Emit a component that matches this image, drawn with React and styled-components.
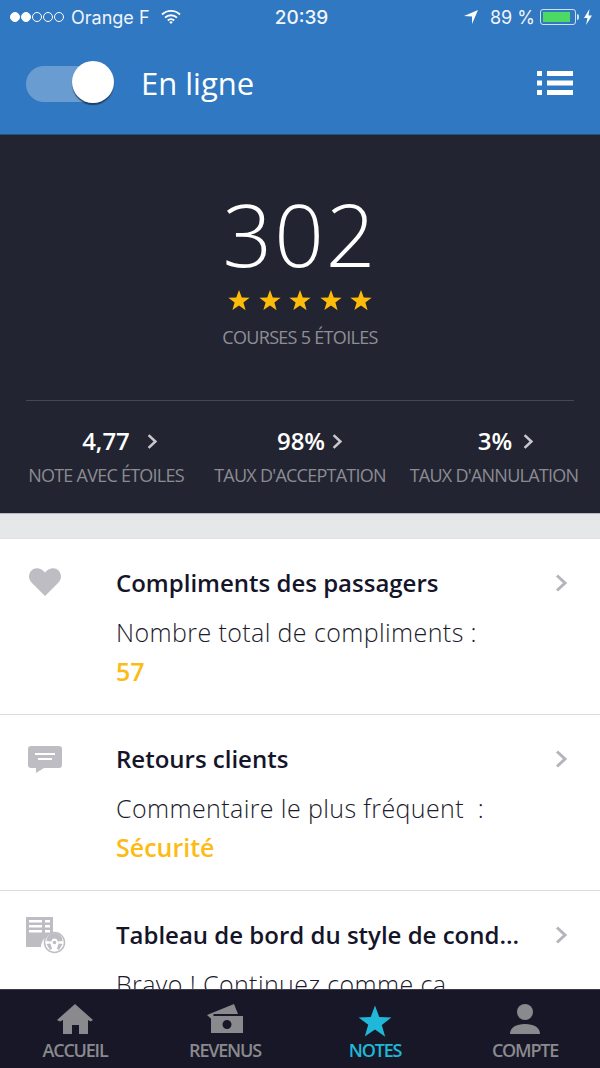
import React from 'react'
import styled, { createGlobalStyle } from 'styled-components'

const GlobalStyle = createGlobalStyle`
html, body {
    margin: 0;
    padding: 0;
    background: #fff;
}
* {
    box-sizing: border-box;
}
`

const Screen = styled.div`
width: 600px;
height: 1068px;
display: flex;
flex-direction: column;
overflow: hidden;
font-family: "Open Sans", "Noto Sans", sans-serif;
`

const TopBar = styled.header`
height: 135px;
flex: none;
background: #3078c1;
border-bottom: 1px solid #23547f;
color: #fff;
`

const StatusBar = styled.div`
height: 34px;
padding: 0 7px 0 10px;
display: grid;
grid-template-columns: 1fr auto 1fr;
align-items: center;
font-family: "Inter", "Open Sans", sans-serif;
font-size: 18px;
color: #f1f5fa;
`

const StatusSide = styled.div`
display: flex;
align-items: center;
justify-content: ${props => props.$end ? 'flex-end' : 'flex-start'};
`

const Signal = styled.div`
display: flex;
gap: 1px;
margin-right: 7px;
`

const Dot = styled.span`
width: 10px;
height: 10px;
border-radius: 50%;
border: 1px solid #fff;
background: ${props => props.$on ? '#fff' : 'transparent'};
`

const Clock = styled.div`
font-weight: 500;
font-size: 19px;
`

const Battery = styled.div`
width: 36px;
height: 16px;
margin: 0 7px 0 5px;
padding: 2px 5px 2px 2px;
border: 1px solid #cfe0f0;
border-radius: 3px;
position: relative;
&:after {
    content: "";
    position: absolute;
    right: -4px;
    top: 4px;
    width: 2px;
    height: 6px;
    background: #cfe0f0;
    border-radius: 0 2px 2px 0;
}
`

const BatteryFill = styled.div`
height: 100%;
background: #4cd964;
`

const NavRow = styled.div`
height: 100px;
padding: 0 27px 3px 26px;
display: flex;
align-items: center;
`

const Toggle = styled.div`
width: 88px;
height: 36px;
margin-top: 3px;
border-radius: 18px;
background: rgba(255, 255, 255, 0.28);
position: relative;
`

const Knob = styled.div`
position: absolute;
right: 0;
top: -5px;
width: 42px;
height: 42px;
border-radius: 50%;
background: #fff;
box-shadow: 0 2px 1px rgba(0, 0, 0, 0.45);
`

const NavTitle = styled.div`
margin-left: 27px;
font-size: 31px;
line-height: 40px;
flex: 1;
`

const Hero = styled.section`
height: 378px;
flex: none;
background: #232431;
padding: 0 26px;
display: flex;
flex-direction: column;
align-items: center;
`

const BigNumber = styled.div`
margin-top: 46px;
font-size: 87px;
font-weight: 300;
line-height: 104px;
color: #fff;
letter-spacing: 2px;
`

const Stars = styled.div`
margin-top: 4px;
display: flex;
gap: 8.5px;
height: 24px;
`

const CourseLabel = styled.div`
margin-top: 12px;
font-size: 18px;
line-height: 24px;
color: #8e8f96;
letter-spacing: -0.7px;
`

const Stats = styled.div`
margin-top: 51px;
width: 100%;
border-top: 1px solid #45464f;
display: grid;
grid-template-columns: 160px 228px 160px;
padding-top: 25px;
`

const Stat = styled.div`
display: flex;
flex-direction: column;
align-items: center;
`

const StatValue = styled.div`
display: flex;
align-items: center;
gap: ${props => props.$gap}px;
padding-left: ${props => props.$indent}px;
font-size: 24px;
font-weight: 600;
line-height: 30px;
color: #fff;
`

const StatLabel = styled.div`
margin-top: 6px;
font-size: 18px;
line-height: 26px;
color: #8b8c93;
white-space: nowrap;
letter-spacing: -0.75px;
`

const Band = styled.div`
height: 26px;
flex: none;
background: #e6e7e9;
border-top: 1px solid #b9b9bd;
border-bottom: 1px solid #dfe1e6;
`

const List = styled.main`
flex: 1;
min-height: 0;
overflow: hidden;
background: #fff;
`

const Row = styled.article`
height: 176px;
padding: 27px 32px 0 26px;
display: grid;
grid-template-columns: 90px 1fr 20px;
border-bottom: 1px solid #dcdde2;
`

const RowIcon = styled.div`
height: 36px;
color: #bdbdc3;
`

const RowBody = styled.div`
min-width: 0;
`

const RowTitle = styled.h2`
margin: 0;
padding-right: 24px;
font-size: 24px;
font-weight: 600;
line-height: 34px;
color: #15152a;
white-space: nowrap;
overflow: hidden;
text-overflow: ellipsis;
`

const RowText = styled.p`
margin: 15px 0 0;
font-size: 25px;
font-weight: 300;
line-height: 34px;
color: #1b1b2b;
white-space: pre;
letter-spacing: 0.4px;
`

const RowValue = styled.div`
margin-top: 5px;
font-size: 25px;
font-weight: 600;
line-height: 34px;
color: #fdbb14;
`

const RowChevron = styled.div`
height: 34px;
display: flex;
align-items: center;
justify-content: flex-end;
`

const TabBar = styled.nav`
height: 79px;
flex: none;
background: #171727;
border-top: 1px solid #3c3c48;
display: grid;
grid-template-columns: 150px 150px 150px 150px;
`

const Tab = styled.div`
display: flex;
flex-direction: column;
align-items: center;
padding-top: 14px;
color: ${props => props.$active ? '#1fb8d8' : '#8a8a8e'};
`

const TabIcon = styled.div`
height: 33px;
`

const TabLabel = styled.div`
font-size: 18px;
font-weight: 600;
line-height: 26px;
letter-spacing: -1.2px;
`

const StarIcon = ({ size = 24, color = 'currentColor' }) => (
    <svg width={size} height={size} viewBox="0 0 24 24">
        <path fill={color} d="M12 1l3 8.200 8.600.3-6.800 5.300 2.400 8.300L12 18l-7.200 4.900 2.400-8.300L.4 9.500 9 9.200z" />
    </svg>
)

const Chevron = ({ color = '#b4b4ba', w = 14, h = 20 }) => (
    <svg width={w} height={h} viewBox="0 0 14 20">
        <path d="M3 2.500l8 7.500-8 7.500" fill="none" stroke={color} strokeWidth="3" />
    </svg>
)

const Wifi = () => (
    <svg width="20" height="16" viewBox="0 0 20 16" style={{ marginLeft: 11 }}>
        <path d="M1 5.500a13 13 0 0 1 18 0M4 8.700a8.600 8.600 0 0 1 12 0M6.800 11.500a4.600 4.600 0 0 1 6.400 0" fill="none" stroke="#fff" strokeWidth="1.800" />
        <path d="M8.200 13a2.600 2.600 0 0 1 3.600 0L10 15z" fill="#fff" />
    </svg>
)

const LocationArrow = () => (
    <svg width="16" height="16" viewBox="0 0 16 16" style={{ marginRight: 11 }}>
        <path d="M15 1L9 15V7.500L1 7z" fill="#fff" />
    </svg>
)

const Bolt = () => (
    <svg width="10" height="16" viewBox="0 0 10 16">
        <path d="M6.500 0L1 9h3.500L3 16l6-9.500H5.500z" fill="#fff" />
    </svg>
)

const MenuIcon = () => (
    <svg width="36" height="24" viewBox="0 0 36 24">
        <path fill="#fff" d="M0 0h5v5H0zM0 9.500h5v5H0zM0 19h5v5H0zM10 0h26v5H10zM10 9.500h26v5H10zM10 19h26v5H10z" />
    </svg>
)

const HeartIcon = () => (
    <svg width="32" height="28" viewBox="0 0 32 28" style={{ marginLeft: 3, marginTop: 2 }}>
        <path fill="currentColor" d="M16 28L2.500 14.500C-1 11-.5 5.500 2.500 2.500c3.500-3.300 9-3 13.500 2 4.500-5 10-5.300 13.500-2 3 3 3.500 8.500 0 12z" />
    </svg>
)

const CommentIcon = () => (
    <svg width="34" height="27" viewBox="0 0 34 27" style={{ marginTop: 4, marginLeft: 2 }}>
        <path fill="currentColor" fillRule="evenodd" d="M3 0h28a3 3 0 0 1 3 3v16a3 3 0 0 1-3 3H16l-8 5v-5H3a3 3 0 0 1-3-3V3a3 3 0 0 1 3-3zM7 7v2h20V7zM10 12v2h14v-2z" />
    </svg>
)

const DashboardIcon = () => (
    <svg width="40" height="37" viewBox="0 0 40 37" style={{ marginTop: -1 }}>
        <path fill="currentColor" d="M0 0h27v18a12 12 0 0 0-12 12H0z" />
        <path fill="#fff" d="M3 3h13v2.500H3zM19 3h5v2.500h-5zM3 8h13v2.500H3zM19 8h5v2.500h-5zM3 13h13v2.500H3zM19 13h5v2.500h-5z" />
        <circle cx="28.500" cy="25.500" r="10" fill="#fff" stroke="currentColor" strokeWidth="1.500" />
        <path fill="currentColor" d="M20.500 24a8 8 0 0 1 16 0l-5 .5a3 3 0 0 0-6 0z" />
        <circle cx="28.500" cy="25.500" r="1.800" fill="currentColor" />
        <path fill="currentColor" d="M20.500 27l4-.5 1.500 5.500-2 1zM36.500 27l-4-.5-1.500 5.500 2 1z" />
    </svg>
)

const HomeIcon = () => (
    <svg width="36" height="30" viewBox="0 0 36 30">
        <path fill="currentColor" d="M18 0l18 16-2.500 1.500L31 16v14H22v-9h-7v9H6V16l-3 1.500L0 16z" />
    </svg>
)

const CashIcon = () => (
    <svg width="36" height="29" viewBox="0 0 36 29">
        <path fill="currentColor" d="M0 11L27 0l4 10H6.500v7z" />
        <path fill="currentColor" fillRule="evenodd" d="M4 12h32v17H4zM20 16a4.500 4.500 0 1 0 0 9 4.500 4.500 0 0 0 0-9z" />
    </svg>
)

const PersonIcon = () => (
    <svg width="30" height="30" viewBox="0 0 30 30">
        <circle cx="15" cy="8" r="8" fill="currentColor" />
        <path fill="currentColor" d="M0 30c0-6.500 6-10 15-10s15 3.500 15 10z" />
    </svg>
)

const stats = [
    { value: '4,77', label: 'NOTE AVEC ÉTOILES', gap: 16, indent: 28 },
    { value: '98%', label: "TAUX D'ACCEPTATION", gap: 6, indent: 20 },
    { value: '3%', label: "TAUX D'ANNULATION", gap: 10, indent: 24 },
]

const rows = [
    { icon: <HeartIcon />, title: 'Compliments des passagers', text: 'Nombre total de compliments :', value: '57' },
    { icon: <CommentIcon />, title: 'Retours clients', text: 'Commentaire le plus fréquent  :', value: 'Sécurité' },
    { icon: <DashboardIcon />, title: 'Tableau de bord du style de conduite', text: 'Bravo ! Continuez comme ça' },
]

const tabs = [
    { label: 'ACCUEIL', icon: <HomeIcon /> },
    { label: 'REVENUS', icon: <CashIcon /> },
    { label: 'NOTES', icon: <StarIcon size={34} />, active: true },
    { label: 'COMPTE', icon: <PersonIcon /> },
]

const App = () => {
    return (
        <Screen>
            <GlobalStyle />
            <TopBar>
                <StatusBar>
                    <StatusSide>
                        <Signal>
                            {[true, true, false, false, false].map((on, i) => <Dot key={i} $on={on} />)}
                        </Signal>
                        Orange F
                        <Wifi />
                    </StatusSide>
                    <Clock>20:39</Clock>
                    <StatusSide $end>
                        <LocationArrow />
                        89 %
                        <Battery><BatteryFill /></Battery>
                        <Bolt />
                    </StatusSide>
                </StatusBar>
                <NavRow>
                    <Toggle><Knob /></Toggle>
                    <NavTitle>En ligne</NavTitle>
                    <MenuIcon />
                </NavRow>
            </TopBar>
            <Hero>
                <BigNumber>302</BigNumber>
                <Stars>
                    {[0, 1, 2, 3, 4].map(i => <StarIcon key={i} size={22} color="#fdbb0a" />)}
                </Stars>
                <CourseLabel>COURSES 5 ÉTOILES</CourseLabel>
                <Stats>
                    {stats.map(s => (
                        <Stat key={s.label}>
                            <StatValue $gap={s.gap} $indent={s.indent}>{s.value}<Chevron color="#c8c8cc" w={12} h={17} /></StatValue>
                            <StatLabel>{s.label}</StatLabel>
                        </Stat>
                    ))}
                </Stats>
            </Hero>
            <Band />
            <List>
                {rows.map(r => (
                    <Row key={r.title}>
                        <RowIcon>{r.icon}</RowIcon>
                        <RowBody>
                            <RowTitle>{r.title}</RowTitle>
                            <RowText>{r.text}</RowText>
                            {r.value && <RowValue>{r.value}</RowValue>}
                        </RowBody>
                        <RowChevron><Chevron /></RowChevron>
                    </Row>
                ))}
            </List>
            <TabBar>
                {tabs.map(t => (
                    <Tab key={t.label} $active={t.active}>
                        <TabIcon>{t.icon}</TabIcon>
                        <TabLabel>{t.label}</TabLabel>
                    </Tab>
                ))}
            </TabBar>
        </Screen>
    )
}

export default App
